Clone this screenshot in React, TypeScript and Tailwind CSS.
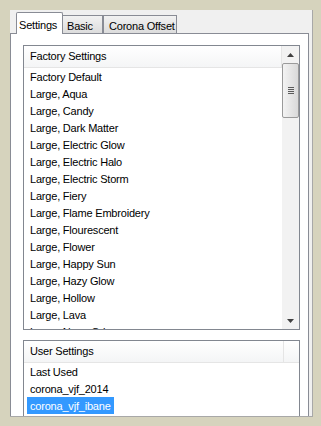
import React from "react";

const factory = [
  "Factory Default",
  "Large, Aqua",
  "Large, Candy",
  "Large, Dark Matter",
  "Large, Electric Glow",
  "Large, Electric Halo",
  "Large, Electric Storm",
  "Large, Fiery",
  "Large, Flame Embroidery",
  "Large, Flourescent",
  "Large, Flower",
  "Large, Happy Sun",
  "Large, Hazy Glow",
  "Large, Hollow",
  "Large, Lava",
  "Large, Neon Orbs",
];

const user = ["Last Used", "corona_vjf_2014", "corona_vjf_ibane"];

function Row({ text, selected }: { text: string; selected?: boolean }) {
  return (
    <div className="h-[17px] flex items-center pl-[3px] shrink-0">
      <span
        className={
          selected
            ? "bg-[#3399ff] text-white h-[17px] leading-[18px] pl-[3px] pr-[3px] whitespace-nowrap"
            : "text-black h-[17px] leading-[18px] pl-[3px] whitespace-nowrap"
        }
      >
        {text}
      </span>
    </div>
  );
}

function Header({ text }: { text: string }) {
  return (
    <div className="h-[22px] shrink-0 flex border-b border-[#e5e5e5] bg-gradient-to-b from-white to-[#f4f5f6]">
      <div className="flex-1 leading-[21px] pl-[6px] text-black border-r border-[#e5e5e5]">{text}</div>
    </div>
  );
}

function Scrollbar() {
  return (
    <div className="w-[17px] shrink-0 bg-[#f2f2f2] flex flex-col">
      <div className="h-[17px] flex items-center justify-center">
        <svg width="7" height="4" viewBox="0 0 7 4">
          <path d="M0 4 L3.5 0 L7 4 Z" fill="#404040" />
        </svg>
      </div>
      <div className="h-[55px] rounded-[2px] border border-[#9a9a9a] bg-gradient-to-r from-[#f3f3f3] to-[#d9d9d9] flex flex-col items-center justify-center gap-[1px]">
        <div className="w-[6px] h-px bg-[#5a5a5a]" />
        <div className="w-[6px] h-px bg-[#5a5a5a]" />
        <div className="w-[6px] h-px bg-[#5a5a5a]" />
        <div className="w-[6px] h-px bg-[#5a5a5a]" />
      </div>
      <div className="flex-1" />
      <div className="h-[17px] flex items-center justify-center">
        <svg width="7" height="4" viewBox="0 0 7 4">
          <path d="M0 0 L3.5 4 L7 0 Z" fill="#404040" />
        </svg>
      </div>
    </div>
  );
}

export default function App() {
  return (
    <div
      className="w-[321px] h-[426px] bg-[#d6d3bd] pt-[10px] pl-[10px] pr-[8px] pb-[9px] text-[11px] tracking-[-0.2px] overflow-hidden"
      style={{ fontFamily: '"Liberation Sans", Arial, sans-serif' }}
    >
      <div className="h-full flex flex-col bg-[#f0f0f0] border-r border-b border-[#a8a8a8] pr-[3px]">
        <div className="h-[23px] shrink-0 flex items-end pl-[6px]">
          <div className="relative z-10 -mb-px h-[22px] w-[47px] bg-white border border-b-0 border-[#898c95] rounded-t-[2px] pl-[2px] pt-[4px] text-black whitespace-nowrap">
            Settings
          </div>
          <div className="h-[18px] w-[41px] -ml-px border border-b-0 border-[#898c95] bg-gradient-to-b from-[#f2f2f2] to-[#dcdcdc] pl-[4px] pt-[2px] text-black whitespace-nowrap">
            Basic
          </div>
          <div className="h-[18px] w-[74px] border border-b-0 border-[#898c95] bg-gradient-to-b from-[#f2f2f2] to-[#dcdcdc] pl-[5px] pt-[2px] text-black whitespace-nowrap">
            Corona Offset
          </div>
        </div>
        <div className="flex-1 min-h-0 bg-white border border-b-0 border-[#898c95] pl-[12px] pr-[8px] pt-[11px] flex flex-col gap-[10px] overflow-hidden">
          <div className="h-[285px] shrink-0 border border-[#828790] flex overflow-hidden">
            <div className="flex-1 flex flex-col overflow-hidden">
              <Header text="Factory Settings" />
              <div className="flex-1 min-h-0 flex flex-col overflow-hidden">
                {factory.map((t) => (
                  <Row key={t} text={t} />
                ))}
              </div>
            </div>
            <Scrollbar />
          </div>
          <div className="flex-1 min-h-0 border border-b-0 border-[#828790] flex flex-col overflow-hidden">
            <div className="h-[22px] shrink-0 flex border-b border-[#e5e5e5] bg-gradient-to-b from-white to-[#f4f5f6]">
              <div className="flex-1 leading-[21px] pl-[6px] text-black border-r border-[#e5e5e5]">User Settings</div>
              <div className="w-[15px]" />
            </div>
            <div className="flex-1 min-h-0 flex flex-col overflow-hidden">
              {user.map((t, i) => (
                <Row key={t} text={t} selected={i === 2} />
              ))}
            </div>
          </div>
        </div>
      </div>
    </div>
  );
}
